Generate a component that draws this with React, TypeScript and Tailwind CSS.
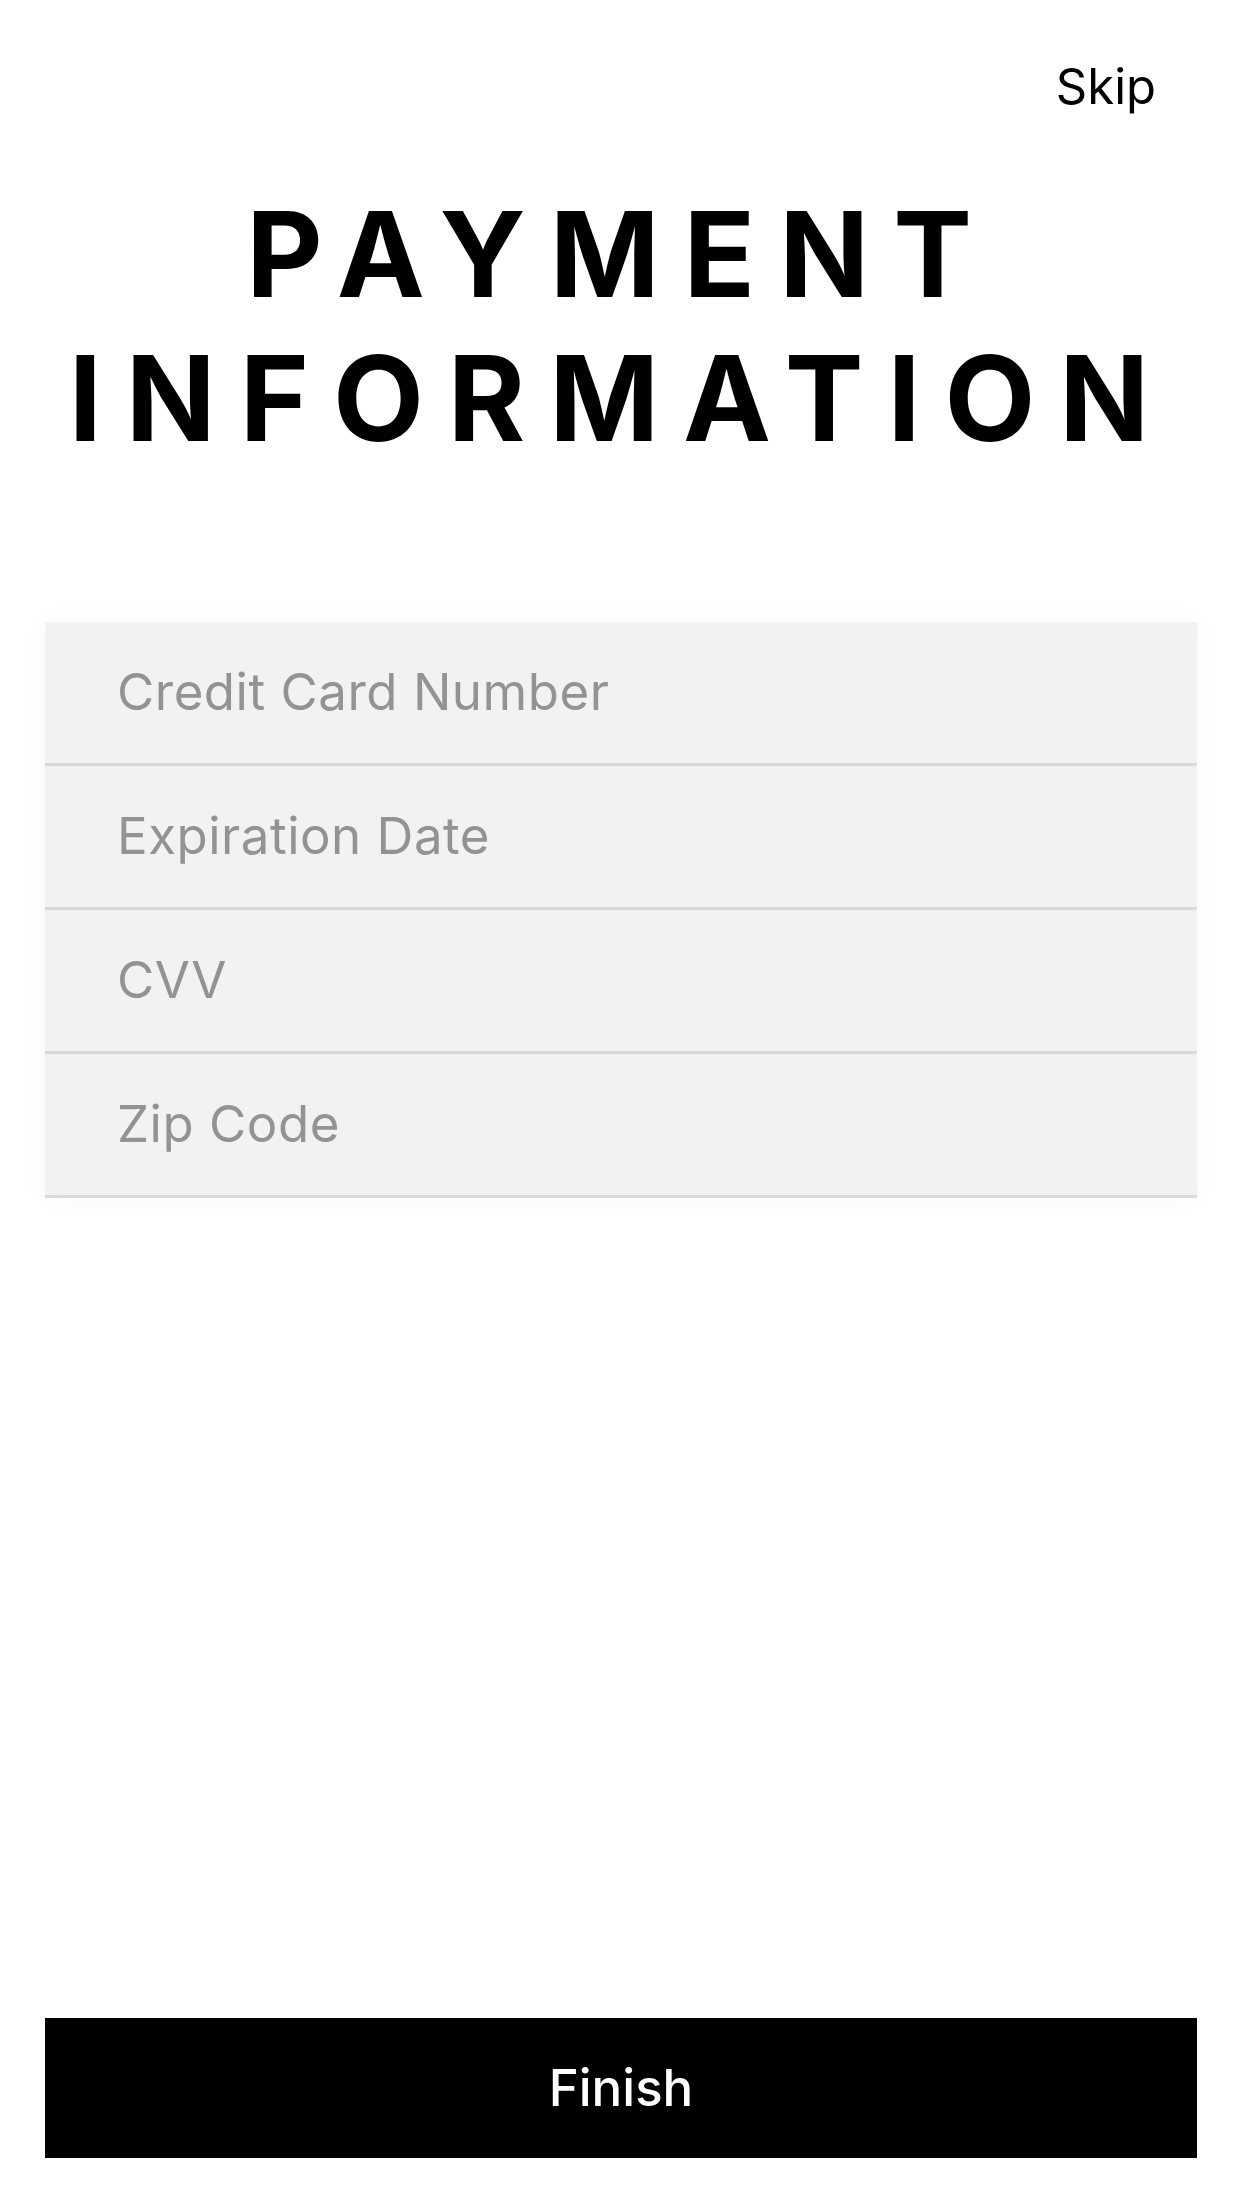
import React from "react";

const fields = ["Credit Card Number", "Expiration Date", "CVV", "Zip Code"];

export default function App() {
  return (
    <div className="flex h-[2208px] w-full flex-col bg-white font-['Inter',sans-serif]">
      {/* Top bar */}
      <div className="flex justify-end px-[86px] pt-[58px]">
        <button className="text-[49px] leading-[58px] text-black">Skip</button>
      </div>

      {/* Title */}
      <h1 className="mt-[66px] text-center text-[118px] font-bold leading-[144px] tracking-[0.203em] text-black">
        PAYMENT
        <br />
        INFORMATION
      </h1>

      {/* Form */}
      <div className="mx-[45px] mt-[152px] bg-[#f2f2f2] shadow-[0_0_30px_rgba(0,0,0,0.03)]">
        {fields.map((f) => (
          <div key={f} className="flex h-[144px] items-center border-b-[3px] border-[#d9d9d9] pl-[72px]">
            <input
              placeholder={f}
              className="w-full bg-transparent text-[51px] tracking-[0.01em] text-black outline-none placeholder:text-[#939393]"
            />
          </div>
        ))}
      </div>

      <div className="flex-1" />

      {/* Submit */}
      <button className="mx-[45px] mb-[50px] h-[140px] bg-black text-[51px] font-medium text-white">
        Finish
      </button>
    </div>
  );
}
